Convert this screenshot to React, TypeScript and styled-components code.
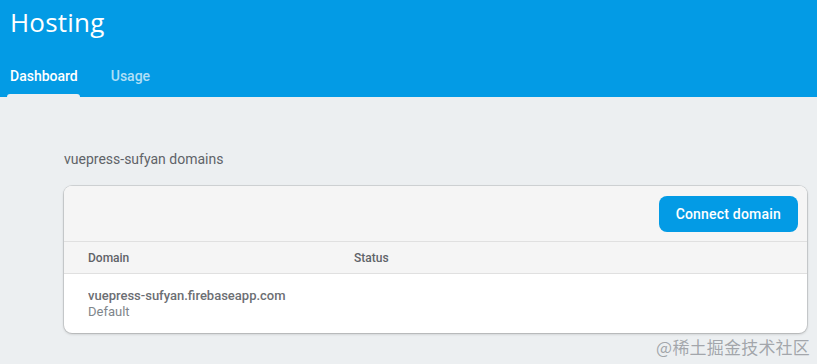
import React from 'react';
import styled, { createGlobalStyle } from 'styled-components';

const GlobalStyle = createGlobalStyle`
  html, body {
    margin: 0;
    padding: 0;
    background: #eceff1;
    font-family: Roboto, "Noto Sans", Arial, sans-serif;
  }
`;

const Page = styled.div`
  position: relative;
  width: 817px;
  height: 364px;
  overflow: hidden;
  background: #eceff1;
`;

const Header = styled.header`
  background-color: #039be5;
  height: 97px;
  box-sizing: border-box;
  padding: 6px 0 0 10px;
  display: flex;
  flex-direction: column;
  justify-content: space-between;
`;

const Title = styled.h1`
  margin: 0;
  color: white;
  font-size: 26px;
  font-weight: 400;
  line-height: 32px;
  font-family: "Open Sans", Roboto, sans-serif;
  letter-spacing: 0.2px;
`;

const Tabs = styled.nav`
  display: flex;
  gap: 33px;
`;

const Tab = styled.div<{ $active?: boolean }>`
  position: relative;
  padding-bottom: 13px;
  font-size: 14px;
  font-weight: 500;
  line-height: 16px;
  color: ${({ $active }) => ($active ? '#ffffff' : 'rgba(255,255,255,0.7)')};

  &::after {
    content: '';
    display: ${({ $active }) => ($active ? 'block' : 'none')};
    position: absolute;
    left: -3px;
    right: -2px;
    bottom: 0;
    height: 3px;
    border-radius: 3px 3px 0 0;
    background: #eceff1;
  }
`;

const Content = styled.main`
  padding: 53px 10px 0 64px;
`;

const SectionTitle = styled.div`
  font-size: 14px;
  color: #5f6368;
  line-height: 18px;
  margin-bottom: 18px;
`;

const Card = styled.section`
  width: 743px;
  background: #ffffff;
  border-radius: 8px;
  box-shadow: 0 0 0 1px rgba(0, 0, 0, 0.1), 0 1px 3px rgba(0, 0, 0, 0.2);
  overflow: hidden;
`;

const Toolbar = styled.div`
  display: flex;
  justify-content: flex-end;
  align-items: center;
  height: 55px;
  padding: 0 9px;
  background: #f5f5f5;
  border-bottom: 1px solid #e0e0e0;
`;

const Button = styled.button`
  height: 36px;
  padding: 0 17px;
  border: none;
  border-radius: 8px;
  background: #039be5;
  color: white;
  font-family: Roboto, sans-serif;
  font-size: 14px;
  font-weight: 500;
  letter-spacing: 0.2px;
`;

const HeadRow = styled.div`
  display: grid;
  grid-template-columns: 266px 1fr;
  align-items: center;
  height: 31px;
  padding-left: 24px;
  background: #f5f5f5;
  border-bottom: 1px solid #e0e0e0;
  font-size: 12px;
  font-weight: 500;
  color: #5f6368;
`;

const Row = styled.div`
  display: grid;
  grid-template-columns: 266px 1fr;
  padding: 14px 0 13px 24px;
`;

const Cell = styled.div`
  display: flex;
  flex-direction: column;
`;

const Primary = styled.span`
  font-size: 13px;
  font-weight: 500;
  color: #5f6368;
  line-height: 16px;
  white-space: nowrap;
  opacity: 0.92;
`;

const Secondary = styled.span`
  font-size: 13px;
  color: #80868b;
  line-height: 16px;
`;

const Watermark = styled.div`
  position: absolute;
  right: 7px;
  bottom: 5px;
  font-size: 17px;
  color: rgba(130, 134, 140, 0.7);
  font-family: "Noto Sans CJK SC", sans-serif;
  letter-spacing: 0.2px;
`;

const App: React.FC = () => {
  return (
    <Page>
      <GlobalStyle />
      <Header>
        <Title>Hosting</Title>
        <Tabs>
          <Tab $active>Dashboard</Tab>
          <Tab>Usage</Tab>
        </Tabs>
      </Header>
      <Content>
        <SectionTitle>vuepress-sufyan domains</SectionTitle>
        <Card>
          <Toolbar>
            <Button>Connect domain</Button>
          </Toolbar>
          <HeadRow>
            <span>Domain</span>
            <span>Status</span>
          </HeadRow>
          <Row>
            <Cell>
              <Primary>vuepress-sufyan.firebaseapp.com</Primary>
              <Secondary>Default</Secondary>
            </Cell>
            <Cell />
          </Row>
        </Card>
      </Content>
      <Watermark>@稀土掘金技术社区</Watermark>
    </Page>
  );
};

export default App;
